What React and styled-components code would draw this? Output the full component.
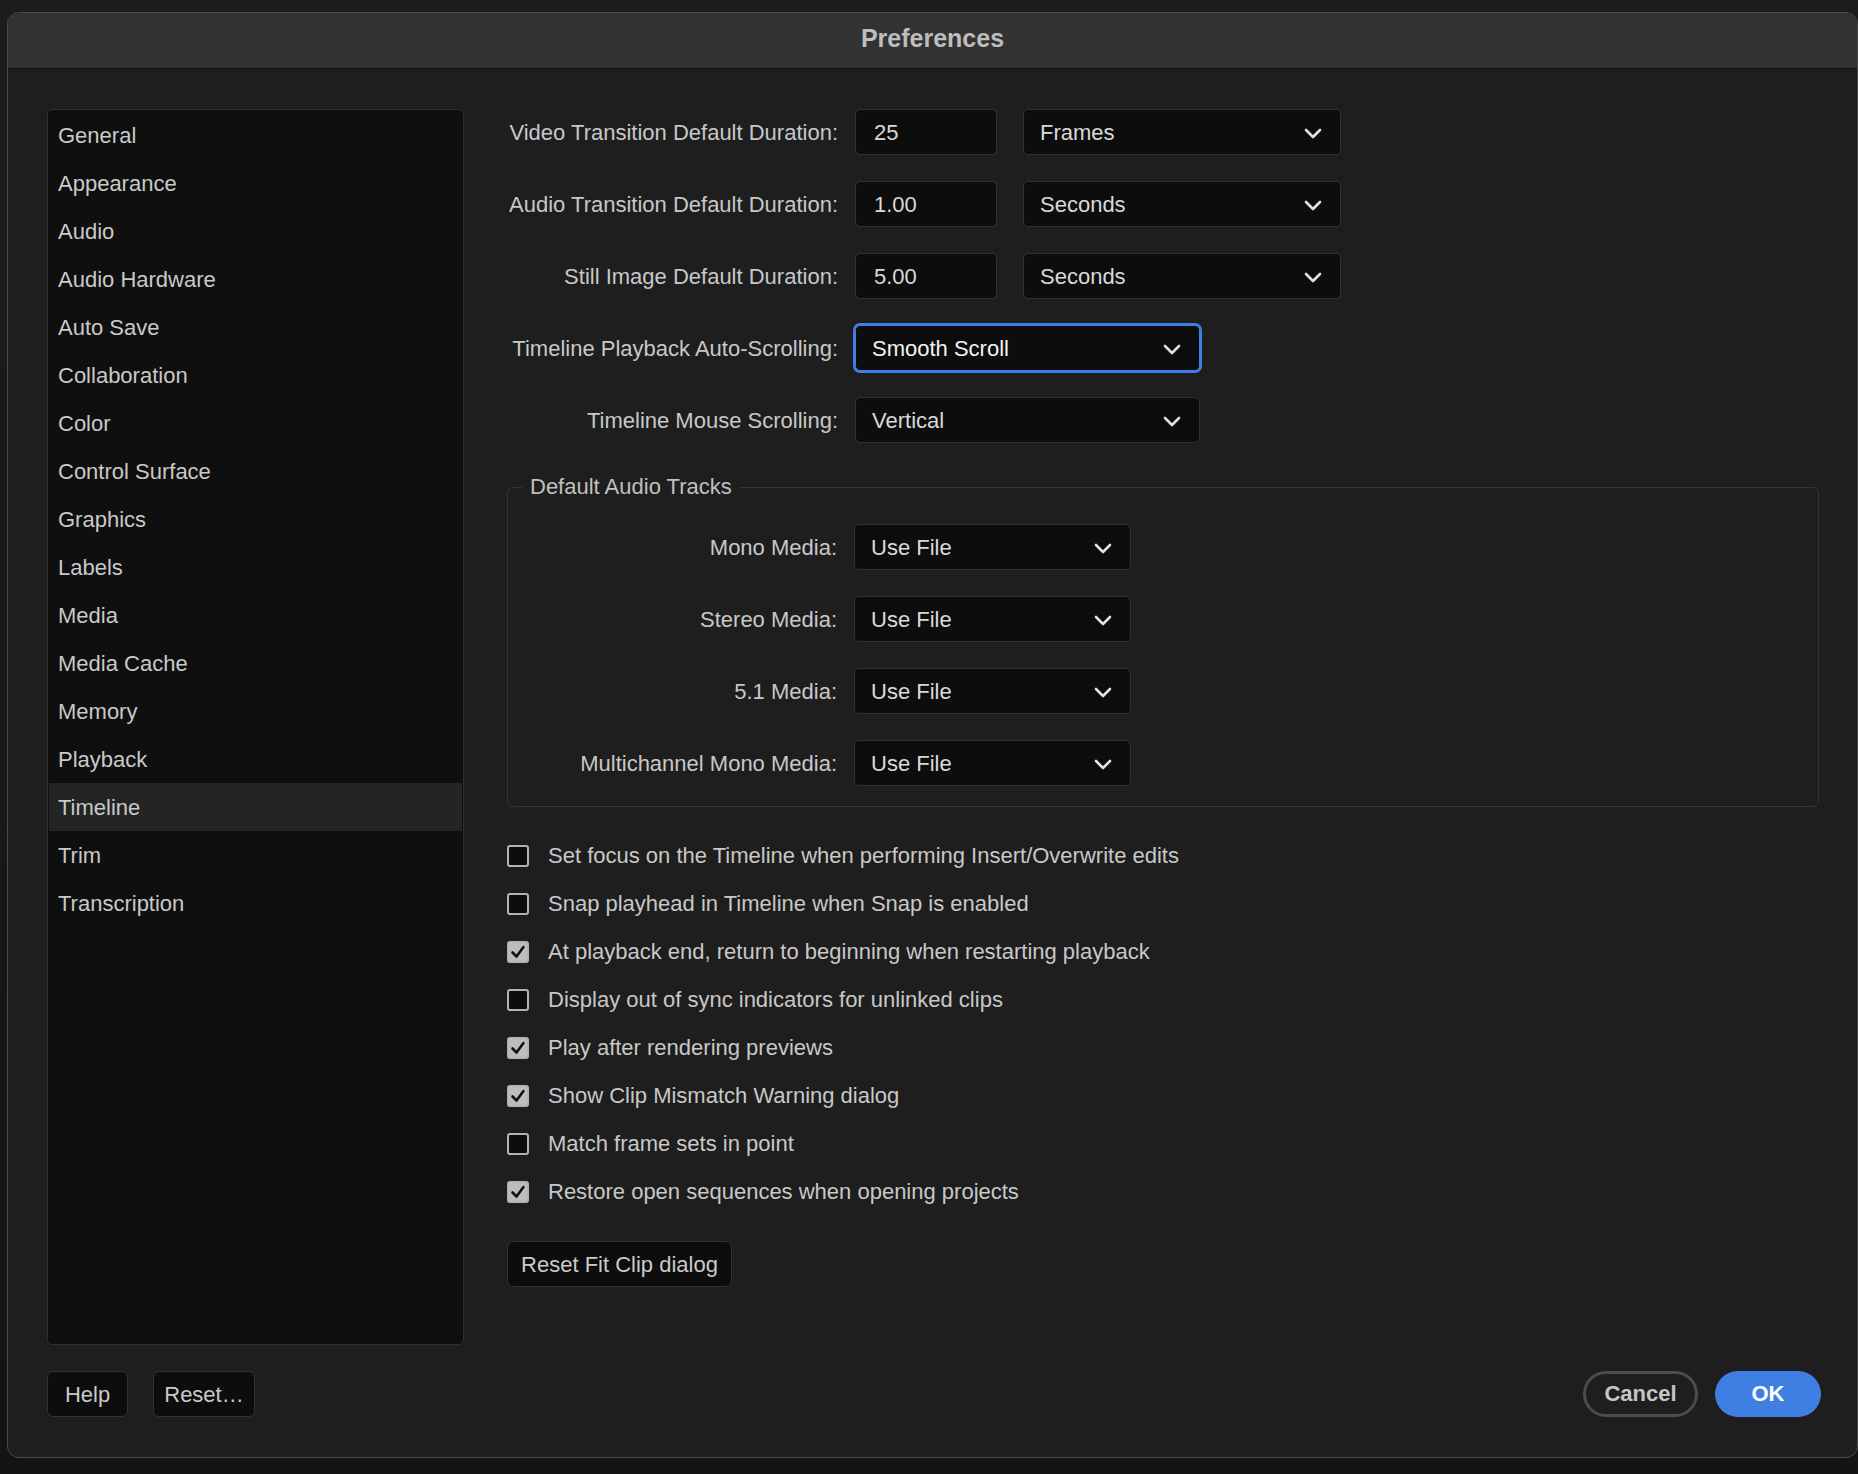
import React from 'react'
import styled, { createGlobalStyle } from 'styled-components'

const GlobalStyle = createGlobalStyle`
  html, body {
    margin: 0;
    padding: 0;
    background: #151515;
  }
  body {
    font-family: 'Liberation Sans', Arial, sans-serif;
    color: #c9c9c9;
  }
  * {
    box-sizing: border-box;
  }
`

const Page = styled.div`
  width: 1858px;
  height: 1474px;
  padding: 12px 0 0 7px;
  overflow: hidden;
  background: linear-gradient(#1c1c1c, #141414);
`
const Dialog = styled.div`
  width: 1851px;
  height: 1446px;
  display: flex;
  flex-direction: column;
  background: #1e1e1e;
  border: 1px solid #4a4a4a;
  border-radius: 12px;
  overflow: hidden;
`
const TitleBar = styled.div`
  flex: none;
  height: 56px;
  display: flex;
  align-items: center;
  justify-content: center;
  padding-bottom: 4px;
  background: #323232;
  border-bottom: 1px solid #0d0d0d;
  font-size: 25px;
  font-weight: 700;
  color: #bdbdbd;
`
const Body = styled.div`
  flex: 1;
  min-height: 0;
  display: grid;
  grid-template-columns: 417px 1fr;
  column-gap: 43px;
  padding: 40px 38px 0 39px;
`
const Sidebar = styled.div`
  background: #0f0f0f;
  border: 1px solid #2f2f2f;
  border-radius: 5px;
  padding: 1px;
`
const NavItem = styled.div`
  height: 48px;
  display: flex;
  align-items: center;
  padding: 2px 0 0 9px;
  font-size: 22px;
  color: #c9c9c9;
  background: ${p => p.$active ? '#232424' : 'transparent'};
`
const Main = styled.div`
  display: flex;
  flex-direction: column;
  align-items: stretch;
`
const FormGrid = styled.div`
  display: grid;
  grid-template-columns: ${p => p.$label}px auto;
  column-gap: 17px;
  row-gap: 26px;
  align-items: center;
  justify-items: start;
`
const Label = styled.div`
  justify-self: end;
  padding-top: 2px;
  font-size: 22px;
  color: #c8c8c8;
  white-space: nowrap;
`
const Controls = styled.div`
  display: flex;
  gap: 26px;
`
const Field = styled.div`
  width: ${p => p.$w}px;
  height: 46px;
  display: flex;
  align-items: center;
  padding: 2px 18px 0;
  background: #0d0d0d;
  border: 1px solid ${p => p.$focus ? '#3f7fe3' : '#303030'};
  border-radius: 5px;
  box-shadow: ${p => p.$focus ? '0 0 0 2px #3f7fe3' : 'none'};
  font-size: 22px;
  color: ${p => p.$focus ? '#f2f2f2' : '#d9d9d9'};
`
const Select = styled(Field)`
  justify-content: space-between;
  padding: 2px 16px 0 16px;
`
const Group = styled.fieldset`
  margin: 31px 0 0;
  padding: 24px 0 20px;
  min-width: 0;
  border: 1px solid #343434;
  border-radius: 6px;
`
const Legend = styled.legend`
  margin-left: 14px;
  padding: 0 8px;
  font-size: 22px;
  line-height: 26px;
  color: #c0c0c0;
`
const CheckList = styled.div`
  margin-top: 25px;
  display: flex;
  flex-direction: column;
`
const CheckRow = styled.label`
  height: 48px;
  display: flex;
  align-items: center;
  gap: 19px;
  font-size: 22px;
  color: #c8c8c8;
`
const Box = styled.span`
  width: 22px;
  height: 22px;
  flex: none;
  display: flex;
  align-items: center;
  justify-content: center;
  border-radius: 3px;
  border: 2.5px solid #b3b3b3;
  background: ${p => p.$checked ? '#bdbdbd' : '#0d0d0d'};
`
const PlainButton = styled.button`
  height: 46px;
  width: ${p => p.$w}px;
  padding: 2px 0 0;
  background: #0d0d0d;
  border: 1px solid #333333;
  border-radius: 6px;
  font-family: inherit;
  font-size: 22px;
  color: #cacaca;
`
const ResetFit = styled(PlainButton)`
  margin-top: 25px;
  align-self: flex-start;
`
const Footer = styled.div`
  flex: none;
  display: flex;
  justify-content: space-between;
  align-items: center;
  padding: 26px 36px 40px 39px;
`
const ButtonGroup = styled.div`
  display: flex;
  gap: ${p => p.$gap}px;
`
const PillButton = styled.button`
  height: 46px;
  width: ${p => p.$w}px;
  padding: 0;
  border-radius: 23px;
  font-family: inherit;
  font-size: 22px;
  font-weight: 700;
  border: ${p => p.$primary ? 'none' : '3px solid #4c4c4c'};
  background: ${p => p.$primary ? '#3f7ee2' : 'transparent'};
  color: ${p => p.$primary ? '#ffffff' : '#c6c6c6'};
`

const Chevron = () => (
  <svg width="22" height="22" viewBox="0 0 22 22">
    <path d="M4 8 L11 15 L18 8" fill="none" stroke="#e2e2e2" strokeWidth="2.6" strokeLinecap="round" strokeLinejoin="round" />
  </svg>
)

const Check = () => (
  <svg width="18" height="18" viewBox="0 0 18 18">
    <path d="M3.5 9.5 L7.5 13.5 L14.5 4" fill="none" stroke="#111" strokeWidth="2.6" strokeLinecap="round" strokeLinejoin="round" />
  </svg>
)

const navItems = [
  'General', 'Appearance', 'Audio', 'Audio Hardware', 'Auto Save', 'Collaboration',
  'Color', 'Control Surface', 'Graphics', 'Labels', 'Media', 'Media Cache',
  'Memory', 'Playback', 'Timeline', 'Trim', 'Transcription',
]

const audioTracks = ['Mono Media:', 'Stereo Media:', '5.1 Media:', 'Multichannel Mono Media:']

const checks = [
  ['Set focus on the Timeline when performing Insert/Overwrite edits', false],
  ['Snap playhead in Timeline when Snap is enabled', false],
  ['At playback end, return to beginning when restarting playback', true],
  ['Display out of sync indicators for unlinked clips', false],
  ['Play after rendering previews', true],
  ['Show Clip Mismatch Warning dialog', true],
  ['Match frame sets in point', false],
  ['Restore open sequences when opening projects', true],
]

export default function App() {
  return (
    <Page>
      <GlobalStyle />
      <Dialog>
        <TitleBar>Preferences</TitleBar>
        <Body>
          <Sidebar>
            {navItems.map(item => (
              <NavItem key={item} $active={item === 'Timeline'}>{item}</NavItem>
            ))}
          </Sidebar>

          <Main>
            <FormGrid $label={331}>
              <Label>Video Transition Default Duration:</Label>
              <Controls>
                <Field $w={142}>25</Field>
                <Select $w={318}>Frames<Chevron /></Select>
              </Controls>

              <Label>Audio Transition Default Duration:</Label>
              <Controls>
                <Field $w={142}>1.00</Field>
                <Select $w={318}>Seconds<Chevron /></Select>
              </Controls>

              <Label>Still Image Default Duration:</Label>
              <Controls>
                <Field $w={142}>5.00</Field>
                <Select $w={318}>Seconds<Chevron /></Select>
              </Controls>

              <Label>Timeline Playback Auto-Scrolling:</Label>
              <Select $w={345} $focus>Smooth Scroll<Chevron /></Select>

              <Label>Timeline Mouse Scrolling:</Label>
              <Select $w={345}>Vertical<Chevron /></Select>
            </FormGrid>

            <Group>
              <Legend>Default Audio Tracks</Legend>
              <FormGrid $label={329}>
                {audioTracks.map(t => (
                  <React.Fragment key={t}>
                    <Label>{t}</Label>
                    <Select $w={277}>Use File<Chevron /></Select>
                  </React.Fragment>
                ))}
              </FormGrid>
            </Group>

            <CheckList>
              {checks.map(([text, on]) => (
                <CheckRow key={text}>
                  <Box $checked={on}>{on && <Check />}</Box>
                  {text}
                </CheckRow>
              ))}
            </CheckList>

            <ResetFit $w={225}>Reset Fit Clip dialog</ResetFit>
          </Main>
        </Body>

        <Footer>
          <ButtonGroup $gap={25}>
            <PlainButton $w={81}>Help</PlainButton>
            <PlainButton $w={102}>Reset…</PlainButton>
          </ButtonGroup>
          <ButtonGroup $gap={17}>
            <PillButton $w={115}>Cancel</PillButton>
            <PillButton $w={106} $primary>OK</PillButton>
          </ButtonGroup>
        </Footer>
      </Dialog>
    </Page>
  )
}
